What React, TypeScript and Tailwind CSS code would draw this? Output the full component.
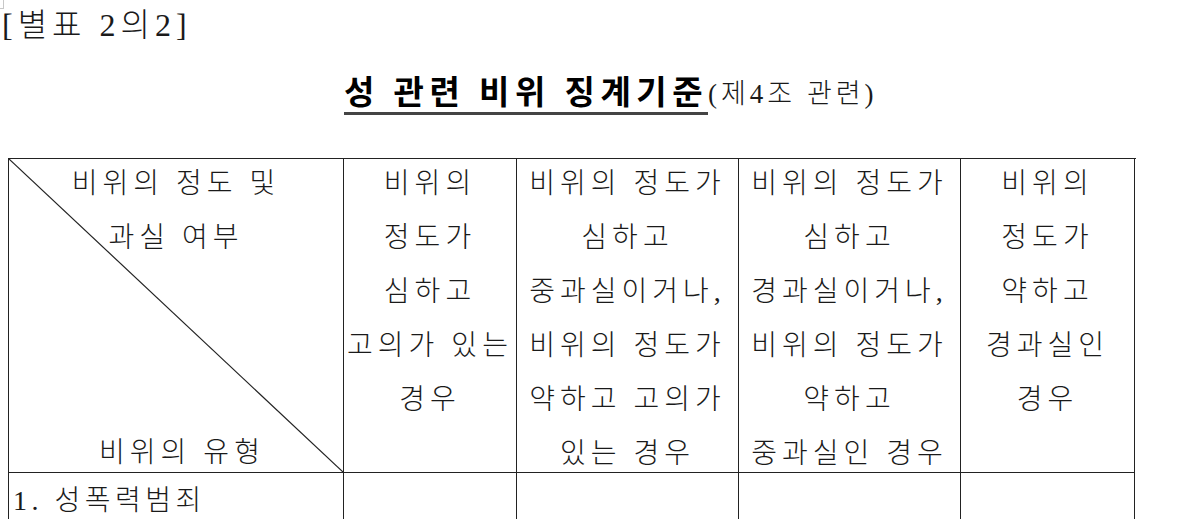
const serif = { fontFamily: '"Liberation Serif", "Noto Sans CJK KR", serif' };

const cols = [
  ['비위의', '정도가', '심하고', '고의가 있는', '경우'],
  ['비위의 정도가', '심하고', '중과실이거나,', '비위의 정도가', '약하고 고의가', '있는 경우'],
  ['비위의 정도가', '심하고', '경과실이거나,', '비위의 정도가', '약하고', '중과실인 경우'],
  ['비위의', '정도가', '약하고', '경과실인', '경우'],
];

function Lines({ lines }: { lines: string[] }) {
  return (
    <div className="mt-[-2px] flex flex-col items-center">
      {lines.map((l, i) => (
        <div key={i} className="whitespace-nowrap leading-[54px]">
          {l}
        </div>
      ))}
    </div>
  );
}

export default function App() {
  return (
    <div
      className="relative h-[519px] w-[1197px] overflow-hidden bg-white font-light text-[#1a1a1a]"
      style={serif}
    >
      {/* page corner mark */}
      <div className="absolute left-0 top-0 h-[9px] w-[4px] border-b border-r border-[#c8c8c8]" />

      <div className="pl-[2px] pt-[4px] text-[32px] leading-[42px] tracking-[5px]">[별표 2의2]</div>

      <div className="mt-[28px] flex items-end pl-[344px]">
        <span className="border-b-[3px] border-[#444] text-[33px] font-bold leading-[38px] tracking-[5.5px] text-black">
          성 관련 비위 징계기준
        </span>
        <span className="pb-[6px] text-[27px] leading-[30px] tracking-[4px]">(제4조 관련)</span>
      </div>

      <div className="ml-[8px] mt-[43px] w-[1128px] text-[28px] tracking-[5px]">
        <div className="grid grid-cols-[335px_173px_222px_222px_174px] border-l border-t border-[#222]">
          <div className="relative flex h-[314px] flex-col justify-between border-b border-r border-[#222]">
            <svg className="absolute inset-0 h-full w-full" viewBox="0 0 335 314" preserveAspectRatio="none">
              <line x1="0" y1="0" x2="335" y2="314" stroke="#222" strokeWidth="1.2" />
            </svg>
            <Lines lines={['비위의 정도 및', '과실 여부']} />
            <div className="mb-[-8px] pl-[12px] text-center leading-[54px]">비위의 유형</div>
          </div>
          {cols.map((c, i) => (
            <div key={i} className="h-[314px] border-b border-r border-[#222]">
              <Lines lines={c} />
            </div>
          ))}

          <div className="h-[60px] border-r border-[#222] pl-[4px] pt-[8px] leading-[40px] tracking-[4.5px]">
            1. 성폭력범죄
          </div>
          <div className="h-[60px] border-r border-[#222]" />
          <div className="h-[60px] border-r border-[#222]" />
          <div className="h-[60px] border-r border-[#222]" />
          <div className="h-[60px] border-r border-[#222]" />
        </div>
      </div>
    </div>
  );
}
